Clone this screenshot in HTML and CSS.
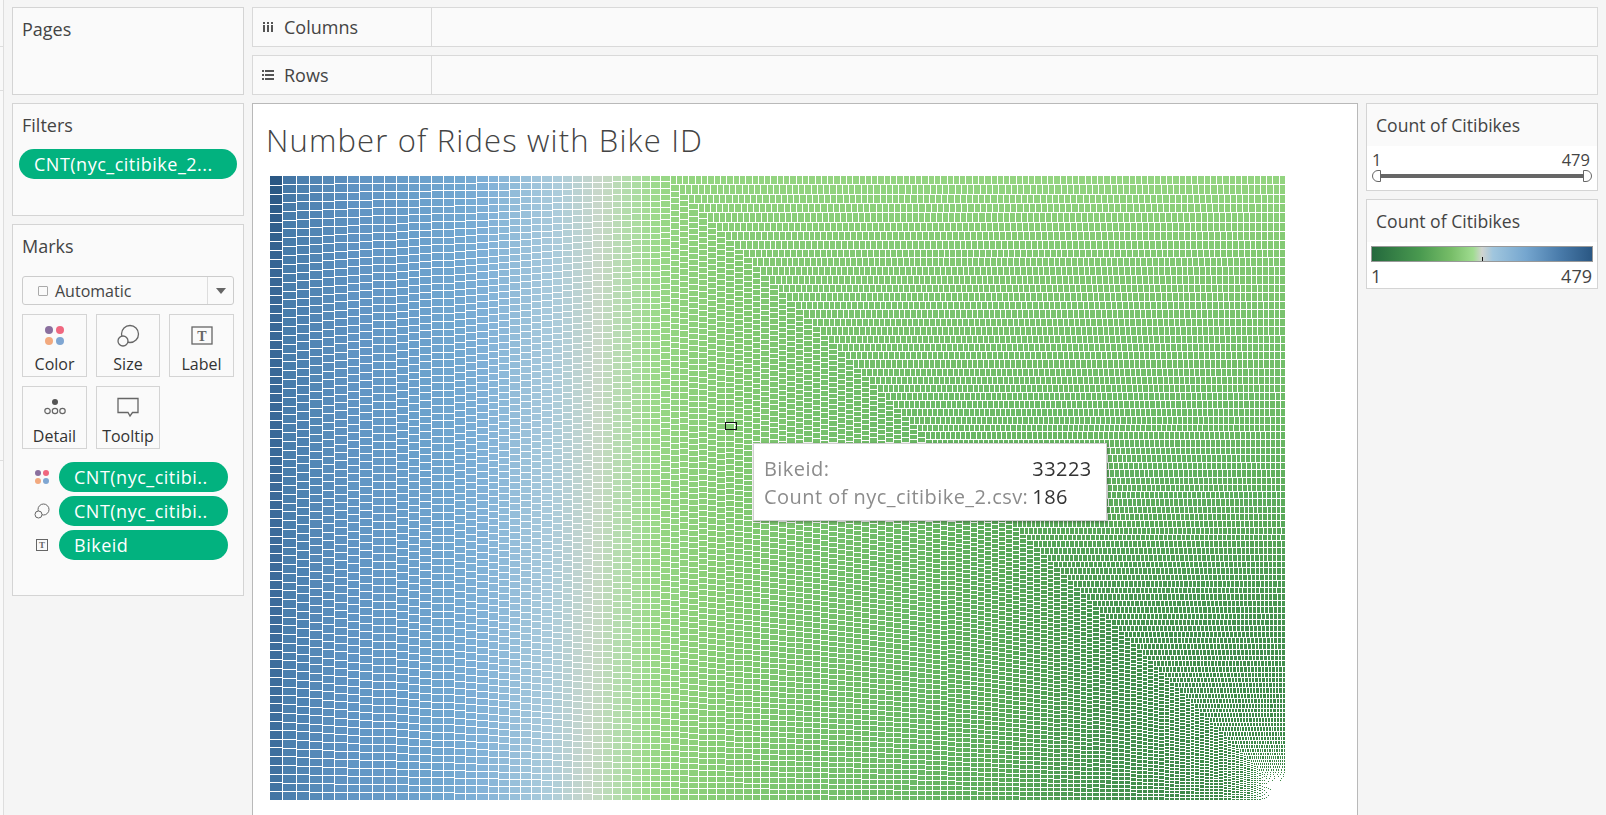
FILE: index.html
```html
<!DOCTYPE html>
<html lang="en">
<head>
<meta charset="utf-8">
<title>Number of Rides with Bike ID</title>
<link rel="stylesheet" href="styles.css">
</head>
<body>
<div class="app">
  <div class="strip"><i></i><i></i><i class="far"></i></div>
  <aside class="side">
    <section class="card pages"><h2>Pages</h2></section>
    <section class="card filters">
      <h2>Filters</h2>
      <div class="pill pill-wide">CNT(nyc_citibike_2...</div>
    </section>
    <section class="card marks">
      <h2>Marks</h2>
      <div class="select">
        <span class="select-box"></span><span class="select-text">Automatic</span>
        <span class="select-arrow"></span>
      </div>
      <div class="buttons">
        <div class="mbtn">
          <svg width="24" height="24" viewBox="0 0 24 24"><circle cx="6" cy="6" r="4" fill="#8a6f9e"/><circle cx="17" cy="6" r="4" fill="#f0677f"/><circle cx="6" cy="17" r="4" fill="#f2a97e"/><circle cx="17" cy="17" r="4" fill="#7fa6d2"/></svg>
          <span>Color</span>
        </div>
        <div class="mbtn">
          <svg width="24" height="24" viewBox="0 0 24 24" fill="none" stroke="#666" stroke-width="1.3"><circle cx="14" cy="10" r="8.5"/><circle cx="7" cy="17" r="5" fill="#fafafa"/></svg>
          <span>Size</span>
        </div>
        <div class="mbtn">
          <svg width="24" height="24" viewBox="0 0 24 24"><rect x="2" y="3" width="20" height="17" fill="none" stroke="#666" stroke-width="1.3"/><text x="12" y="16.5" class="t-glyph">T</text></svg>
          <span>Label</span>
        </div>
        <div class="mbtn">
          <svg width="24" height="24" viewBox="0 0 24 24" fill="none" stroke="#666" stroke-width="1.2"><circle cx="12" cy="6" r="3" fill="#555" stroke="none"/><circle cx="4.5" cy="15" r="2.7"/><circle cx="12" cy="15" r="2.7"/><circle cx="19.5" cy="15" r="2.7"/></svg>
          <span>Detail</span>
        </div>
        <div class="mbtn">
          <svg width="24" height="24" viewBox="0 0 24 24" fill="none" stroke="#666" stroke-width="1.3"><path d="M2 2.5h20v14h-5.500l-2.500 3.500-2-3.500H2z"/></svg>
          <span>Tooltip</span>
        </div>
      </div>
      <div class="encodings">
        <div class="enc">
          <svg width="16" height="16" viewBox="0 0 16 16"><circle cx="4" cy="4" r="3" fill="#8a6f9e"/><circle cx="12" cy="4" r="3" fill="#f0677f"/><circle cx="4" cy="12" r="3" fill="#f2a97e"/><circle cx="12" cy="12" r="3" fill="#7fa6d2"/></svg>
          <div class="pill">CNT(nyc_citibi..</div>
        </div>
        <div class="enc">
          <svg width="16" height="16" viewBox="0 0 16 16" fill="none" stroke="#666" stroke-width="1"><circle cx="9.500" cy="6.500" r="5.500"/><circle cx="4.500" cy="11.500" r="3.500" fill="#fafafa"/></svg>
          <div class="pill">CNT(nyc_citibi..</div>
        </div>
        <div class="enc">
          <svg width="16" height="16" viewBox="0 0 16 16"><rect x="2.500" y="2.500" width="11" height="11" fill="none" stroke="#666"/><text x="8" y="11" class="t-glyph small">T</text></svg>
          <div class="pill">Bikeid</div>
        </div>
      </div>
    </section>
  </aside>
  <main class="main">
    <div class="shelf">
      <div class="shelf-label">
        <svg width="12" height="12" viewBox="0 0 12 12" fill="#555"><rect x="1" y="1" width="2" height="2"/><rect x="5" y="1" width="2" height="2"/><rect x="9" y="1" width="2" height="2"/><rect x="1" y="4" width="2" height="7"/><rect x="5" y="4" width="2" height="7"/><rect x="9" y="4" width="2" height="7"/></svg>
        <span>Columns</span>
      </div>
    </div>
    <div class="shelf">
      <div class="shelf-label">
        <svg width="12" height="12" viewBox="0 0 12 12" fill="#555"><rect x="0" y="1" width="2" height="2"/><rect x="3" y="1" width="9" height="2"/><rect x="0" y="5" width="2" height="2"/><rect x="3" y="5" width="9" height="2"/><rect x="0" y="9" width="2" height="2"/><rect x="3" y="9" width="9" height="2"/></svg>
        <span>Rows</span>
      </div>
    </div>
    <div class="work">
      <section class="viz">
        <h1>Number of Rides with Bike ID</h1>
        <div class="chart">
          <canvas id="treemap" width="1016" height="625"></canvas>
          <div class="selected"></div>
          <div class="tooltip">
            <span class="k">Bikeid:</span><span class="v">33223</span>
            <span class="k">Count of nyc_citibike_2.csv:</span><span class="v">186</span>
          </div>
        </div>
      </section>
      <aside class="legends">
        <section class="legend">
          <h3>Count of Citibikes</h3>
          <div class="legend-body">
            <div class="range"><span>1</span><span>479</span></div>
            <div class="slider"><b class="handle left"></b><b class="handle right"></b></div>
          </div>
        </section>
        <section class="legend">
          <h3>Count of Citibikes</h3>
          <div class="legend-body">
            <div class="gradient"><i></i></div>
            <div class="range big"><span>1</span><span>479</span></div>
          </div>
        </section>
      </aside>
    </div>
  </main>
</div>
<script src="app.js"></script>
</body>
</html>
```
FILE: styles.css
```css
* { box-sizing: border-box; }
html, body { margin: 0; height: 100%; overflow: hidden; }
body { background: #f5f5f5; font-family: "Open Sans", "Liberation Sans", sans-serif; color: #444; }
h1, h2, h3 { margin: 0; font-weight: 400; }
.app { display: flex; height: 815px; padding-top: 7px; }
.strip { width: 4px; margin-right: 8px; border-right: 1px solid #dedede; background: #f9f9f9; display: flex; flex-direction: column; padding-top: 46px; gap: 43px; height: 815px; margin-top: -7px; }
.strip i { display: block; height: 1px; background: #dedede; }
.strip i.far { margin-top: 326px; }
.side { width: 232px; display: flex; flex-direction: column; gap: 8px; }
.card { background: #fafafa; border: 1px solid #d4d4d4; padding: 10px 9px; }
.card h2 { font-size: 18px; line-height: 22px; color: #444; }
.pages { height: 88px; }
.filters { height: 113px; }
.marks { height: 372px; }
.pill { background: #02b27f; color: #fff; border-radius: 15px; height: 30px; line-height: 30px; font-size: 18px; letter-spacing: .5px; padding-left: 15px; white-space: nowrap; overflow: hidden; }
.filters .pill { margin: 13px 0 0 -3px; width: 218px; }
.select { margin: 19px 0 0; height: 29px; display: flex; align-items: center; background: #fafafa; border: 1px solid #ccc; border-radius: 3px; font-size: 16px; padding-left: 15px; }
.select-box { width: 10px; height: 10px; border: 1.500px solid #aaa; border-radius: 1px; margin-right: 7px; }
.select-text { flex: 1; }
.select-arrow { width: 26px; height: 27px; border-left: 1px solid #ddd; position: relative; }
.select-arrow::after { content: ""; position: absolute; left: 8px; top: 11px; border: 5.500px solid transparent; border-top: 6px solid #666; border-bottom: 0; }
.buttons { display: grid; grid-template-columns: 65px 64px 65px; gap: 9px 9px; margin-top: 9px; }
.mbtn { height: 63px; border: 1px solid #d4d4d4; display: flex; flex-direction: column; align-items: center; padding-top: 9px; font-size: 16px; color: #333; }
.mbtn span { margin-top: 6px; line-height: 20px; }
.t-glyph { font-family: "Liberation Serif", serif; font-weight: 700; font-size: 14px; fill: #666; text-anchor: middle; }
.t-glyph.small { font-size: 9px; }
.encodings { display: flex; flex-direction: column; gap: 4px; margin-top: 13px; padding-left: 12px; }
.enc { display: flex; align-items: center; gap: 9px; }
.enc .pill { width: 169px; }
.main { width: 1346px; margin-left: 8px; display: flex; flex-direction: column; gap: 8px; }
.shelf { height: 40px; background: #fafafa; border: 1px solid #d9d9d9; }
.shelf-label { width: 179px; height: 100%; border-right: 1px solid #d9d9d9; display: flex; align-items: center; gap: 10px; padding-left: 9px; font-size: 18px; color: #444; }
.work { flex: 1; display: flex; gap: 8px; min-height: 0; }
.viz { width: 1106px; background: #fff; border: 1px solid #b9b9b9; border-bottom: 0; padding: 16px 0 0 17px; }
.viz h1 { font-size: 31px; font-weight: 300; line-height: 40px; letter-spacing: 1.15px; color: #444; margin-left: -4px; white-space: nowrap; }
.chart { position: relative; margin-top: 16px; width: 1016px; height: 625px; }
.chart canvas { display: block; }
.selected { position: absolute; left: 455px; top: 246px; width: 12px; height: 8px; border: 1px solid #111; }
.tooltip { position: absolute; left: 483px; top: 267px; width: 354px; height: 78px; background: #fff; border: 1px solid #d0d0d0; box-shadow: 1px 1px 3px rgba(0,0,0,.35); padding: 11px 10px; display: grid; grid-template-columns: auto 1fr; column-gap: 4px; font-size: 20px; line-height: 28px; letter-spacing: .45px; }
.tooltip .k { color: #8c8c8c; white-space: nowrap; }
.tooltip .v { color: #333; font-weight: 500; }
.legends { width: 232px; display: flex; flex-direction: column; gap: 8px; }
.legend { border: 1px solid #d4d4d4; background: #fff; }
.legend h3 { background: #fafafa; font-size: 17.6px; height: 42px; line-height: 42px; padding-left: 9px; }
.legend-body { padding: 0 4px; }
.range { display: flex; justify-content: space-between; font-size: 16.5px; line-height: 22px; padding: 0 3px 0 1px; margin-top: 3px; }
.range.big { font-size: 18px; line-height: 24px; margin-top: 2px; padding: 0 1px 0 0; }
.slider { position: relative; height: 4px; margin: 3px 6px 12px; background: #666; }
.handle { position: absolute; top: -4px; width: 9px; height: 12px; background: #fff; border: 1px solid #666; }
.handle.left { left: -5px; border-radius: 6px 0 0 6px; }
.handle.right { right: -5px; border-radius: 0 6px 6px 0; }
.gradient { position: relative; height: 16px; margin-top: 4px; border: 1px solid #999; background: linear-gradient(90deg, #24693d 0%, #4a9a50 22%, #77bd68 36%, #a0dc90 46%, #d0d4d0 50%, #a0c6de 55%, #75a6cf 70%, #4a7cab 85%, #2a5783 100%); }
.gradient i { position: absolute; left: 50%; bottom: 0; width: 1px; height: 4px; background: #111; }
```
FILE: app.js
```js
(function () {
  var canvas = document.getElementById('treemap');
  var ctx = canvas.getContext('2d');
  var W = canvas.width, H = canvas.height, AREA = W * H;
  var K = 0.27, RATIO = 1.5;

  // value as a function of the cumulative area fraction
  var curve = [[0, 479], [0.002, 445], [0.1, 365], [0.315, 240], [0.49, 200], [0.78, 150], [0.953, 95], [0.993, 50], [0.998, 25], [1, 1]];
  // colour as a function of the cumulative area fraction
  var ramp = [
    [0, [42, 87, 131]], [0.002, [56, 103, 150]], [0.012, [62, 110, 157]], [0.014, [72, 124, 170]],
    [0.08, [96, 148, 195]], [0.18, [113, 167, 208]], [0.207, [127, 176, 215]], [0.276, [170, 203, 220]],
    [0.32, [201, 216, 201]], [0.345, [181, 220, 174]], [0.374, [159, 219, 143]], [0.39, [149, 213, 130]],
    [0.49, [135, 204, 118]], [0.78, [108, 185, 102]], [0.88, [90, 168, 90]], [0.953, [69, 145, 79]], [1, [60, 135, 72]]
  ];

  function lookup(table, t) {
    for (var i = 1; i < table.length; i++) {
      if (t <= table[i][0]) return [table[i - 1], table[i], (t - table[i - 1][0]) / (table[i][0] - table[i - 1][0])];
    }
    var n = table.length - 1;
    return [table[n], table[n], 0];
  }
  function valueAt(t) {
    var s = lookup(curve, t);
    return s[0][1] + (s[1][1] - s[0][1]) * s[2];
  }
  function colorAt(t) {
    var s = lookup(ramp, t);
    return 'rgb(' + [0, 1, 2].map(function (c) { return Math.round(s[0][1][c] + (s[1][1][c] - s[0][1][c]) * s[2]); }).join(',') + ')';
  }

  var x = 0, y = 0, w = W, h = H, t = 0;
  ctx.fillStyle = '#fff';
  ctx.fillRect(0, 0, W, H);

  function cell(x0, y0, x1, y1, c) {
    var l = Math.round(x0), r = Math.round(x1), u = Math.round(y0), d = Math.round(y1);
    if (r - l < 2 || d - u < 2) return;
    ctx.fillStyle = colorAt(c);
    ctx.fillRect(l, u, r - l - 1, d - u - 1);
  }

  while (t < 0.9999 && w > 0.5 && h > 0.5) {
    var column = w + 4 >= h;
    var side = column ? h : w;
    var items = [], sum = 0;
    while (t < 1) {
      var a = Math.max(valueAt(t), 1) * K;
      items.push([a, t]);
      sum += a;
      t += a / AREA;
      var thick = sum / side;
      if (thick * thick / a >= RATIO) break;
    }
    var thickness = sum / side, pos = 0;
    items.forEach(function (it) {
      var len = it[0] / thickness;
      if (column) cell(x, y + pos, x + thickness, y + pos + len, it[1]);
      else cell(x + pos, y, x + pos + len, y + thickness, it[1]);
      pos += len;
    });
    if (column) { x += thickness; w -= thickness; }
    else { y += thickness; h -= thickness; }
  }
})();
```
